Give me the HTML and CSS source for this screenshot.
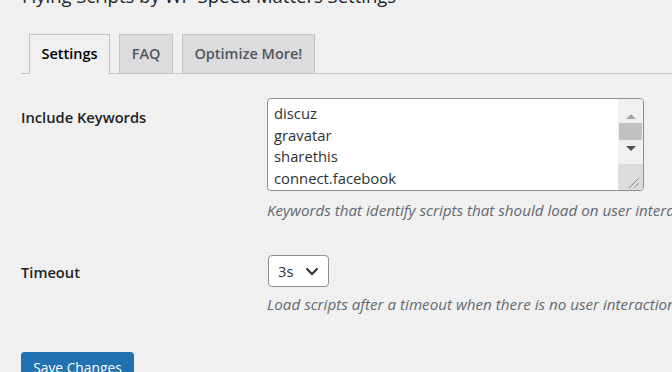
FILE: index.html
```html
<!DOCTYPE html>
<html>
<head>
<meta charset="utf-8">
<link rel="stylesheet" href="styles.css">
</head>
<body>
<div class="wrap">
  <h1 class="title">Flying Scripts by WP Speed Matters Settings</h1>
  <nav class="tabs">
    <a class="tab tab-active">Settings</a>
    <a class="tab">FAQ</a>
    <a class="tab">Optimize More!</a>
  </nav>
  <div class="form-table">
    <div class="row row-keywords">
      <div class="th">Include Keywords</div>
      <div class="td">
        <div class="textarea">
          <div class="ta-text">
            <div>discuz</div>
            <div>gravatar</div>
            <div>sharethis</div>
            <div>connect.facebook</div>
          </div>
          <div class="scrollbar">
            <div class="sb-btn"><span class="arrow-up"></span></div>
            <div class="sb-track"><div class="sb-thumb"></div></div>
            <div class="sb-btn"><span class="arrow-down"></span></div>
            <div class="sb-corner">
              <svg width="24" height="26" viewBox="0 0 24 26"><path d="M11 24 L21 14 M16 24 L21 19" stroke="#8a8a8a" stroke-width="1" fill="none"/></svg>
            </div>
          </div>
        </div>
        <p class="description desc-keywords">Keywords that identify scripts that should load on user interaction. One keyword per line.</p>
      </div>
    </div>
    <div class="row row-timeout">
      <div class="th">Timeout</div>
      <div class="td">
        <div class="select">
          <span>3s</span>
          <svg width="14" height="9" viewBox="0 0 14 9"><path d="M1.5 1.5 L7 7 L12.5 1.5" stroke="#2c3338" stroke-width="2" fill="none"/></svg>
        </div>
        <p class="description desc-timeout">Load scripts after a timeout when there is no user interaction</p>
      </div>
    </div>
  </div>
  <p class="submit"><button class="button-primary">Save Changes</button></p>
</div>
</body>
</html>
```
FILE: styles.css
```css
html, body {
  margin: 0;
  padding: 0;
  background: #f0f0f1;
  overflow: hidden;
  width: 672px;
  height: 372px;
}
body {
  font-family: "Open Sans", "Noto Sans", sans-serif;
  color: #1d2327;
  font-size: 14.8px;
}
.wrap {
  padding-left: 21px;
}
.title {
  margin: -19px 0 0 1px;
  font-size: 18.5px;
  line-height: 29px;
  font-weight: 400;
  color: #1d2327;
  white-space: nowrap;
}
.tabs {
  display: flex;
  align-items: flex-end;
  gap: 9px;
  padding-left: 8px;
  margin-top: 24px;
  border-bottom: 1px solid #c3c4c7;
  height: 39px;
}
.tab {
  display: block;
  box-sizing: border-box;
  height: 39px;
  padding: 7px 11.5px 0;
  line-height: 24px;
  font-size: 14.5px;
  font-weight: 600;
  color: #50575e;
  background: #dcdcde;
  border: 1px solid #c3c4c7;
  border-bottom: none;
  white-space: nowrap;
}
.tab-active {
  background: #f0f0f1;
  color: #000;
  height: 40px;
  margin-bottom: -1px;
}
.row {
  display: flex;
}
.th {
  width: 246px;
  flex: none;
  font-weight: 600;
  font-size: 14.7px;
  line-height: 20px;
  color: #1d2327;
}
.row-keywords .th { padding-top: 33px; }
.row-keywords .td { padding-top: 24px; padding-bottom: 11px; }
.row-timeout .th { padding-top: 31px; }
.row-timeout .td { padding-top: 24px; padding-bottom: 11px; }
.td {
  flex: 1;
  min-width: 0;
}
.textarea {
  box-sizing: border-box;
  width: 377px;
  height: 93px;
  border: 1px solid #8c8f94;
  border-radius: 4px;
  background: #fff;
  display: flex;
  overflow: hidden;
}
.ta-text {
  flex: 1;
  padding: 4px 6px;
  line-height: 21.5px;
  color: #2c3338;
}
.scrollbar {
  width: 25px;
  flex: none;
  background: #f0f0f0;
  display: flex;
  flex-direction: column;
}
.sb-btn {
  height: 17px;
  display: flex;
  align-items: center;
  justify-content: center;
}
.sb-btn:first-child {
  height: 22px;
  align-items: flex-end;
  padding-bottom: 2px;
  box-sizing: border-box;
}
.arrow-up {
  width: 0;
  height: 0;
  border-left: 5px solid transparent;
  border-right: 5px solid transparent;
  border-bottom: 5px solid #a3a3a3;
}
.arrow-down {
  width: 0;
  height: 0;
  border-left: 5px solid transparent;
  border-right: 5px solid transparent;
  border-top: 5px solid #505050;
}
.sb-track {
  padding: 2px 1px 0;
}
.sb-thumb {
  height: 17px;
  background: #c1c1c1;
}
.sb-corner {
  margin-top: auto;
  height: 26px;
  background: #dcdcdc;
}
.sb-corner svg { display: block; }
.description {
  margin: 0;
  font-style: italic;
  font-size: 15.2px;
  color: #646970;
  line-height: 20px;
  white-space: nowrap;
}
.desc-keywords { margin-top: 9px; }
.desc-timeout { margin-top: 7px; }
.select {
  box-sizing: border-box;
  width: 61px;
  height: 32px;
  margin-left: 1px;
  border: 1px solid #8c8f94;
  border-radius: 4px;
  background: #fff;
  display: flex;
  align-items: center;
  justify-content: space-between;
  padding: 0 9px 0 9px;
  color: #2c3338;
}
.submit {
  margin: 0;
  padding-top: 27px;
}
.button-primary {
  box-sizing: border-box;
  height: 32px;
  width: 113px;
  padding: 0;
  background: #2271b1;
  border: 1px solid #2271b1;
  border-radius: 3px;
  color: #fff;
  font-family: "Open Sans", "Noto Sans", sans-serif;
  font-size: 13.8px;
  line-height: 30px;
}
```
